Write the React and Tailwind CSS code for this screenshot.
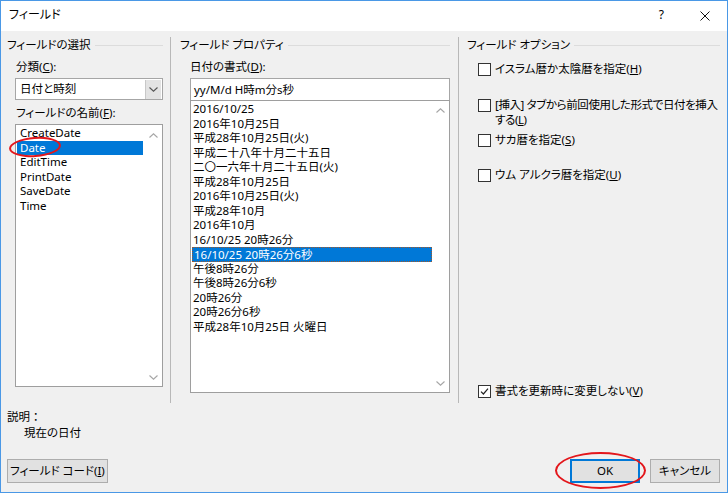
const listA = ["CreateDate", "Date", "EditTime", "PrintDate", "SaveDate", "Time"]

const listB = [
  "2016/10/25",
  "2016年10月25日",
  "平成28年10月25日(火)",
  "平成二十八年十月二十五日",
  "二〇一六年十月二十五日(火)",
  "平成28年10月25日",
  "2016年10月25日(火)",
  "平成28年10月",
  "2016年10月",
  "16/10/25 20時26分",
  "16/10/25 20時26分6秒",
  "午後8時26分",
  "午後8時26分6秒",
  "20時26分",
  "20時26分6秒",
  "平成28年10月25日 火曜日",
]

function Chevron({ up = false, color = "#a6a6a6" }) {
  return (
    <svg width="9" height="5" viewBox="0 0 9 5" className="block">
      <path d={up ? "M0.5 4.5 L4.5 0.8 L8.5 4.5" : "M0.5 0.5 L4.5 4.2 L8.5 0.5"} fill="none" stroke={color} strokeWidth="1.1" />
    </svg>
  )
}

function GroupHeader({ title, className = "" }) {
  return (
    <div className={`flex h-[16px] items-center leading-[16px] ${className}`}>
      <span className="whitespace-nowrap">{title}</span>
      <span className="ml-[4px] h-px flex-1 bg-[#dcdcdc]" />
    </div>
  )
}

function Check({ checked = false }) {
  return (
    <span className="mt-[2px] flex h-[13px] w-[13px] shrink-0 items-center justify-center border border-[#333333] bg-white">
      {checked && (
        <svg width="9" height="9" viewBox="0 0 9 9">
          <path d="M1 4.6 L3.4 7 L8 1.6" fill="none" stroke="#222" strokeWidth="1.2" />
        </svg>
      )}
    </span>
  )
}

function Scroll({ top, bottom }) {
  return (
    <div className={`flex w-[17px] flex-col items-center justify-between ${top} ${bottom}`}>
      <Chevron up />
      <Chevron />
    </div>
  )
}

export default function App() {
  return (
    <div className="relative flex h-[493px] w-[728px] flex-col border border-[#4a98e6] bg-[#f0f0f0] font-['Noto_Sans','Noto_Sans_CJK_JP',sans-serif] text-[11.5px] text-black [font-feature-settings:'palt']">
      {/* title bar */}
      <div className="flex h-[30px] items-center bg-white pl-[8px] text-[12px]">
        <span className="pb-[2px]">フィールド</span>
        <span className="ml-auto pb-[2px] text-[12px]">?</span>
        <svg width="10" height="10" viewBox="0 0 10 10" className="ml-[36px] mr-[17px]">
          <path d="M0.5 0.5 L9.5 9.5 M9.5 0.5 L0.5 9.5" stroke="#111" strokeWidth="1" />
        </svg>
      </div>

      <div className="flex h-[372px]">
        {/* left column */}
        <div className="flex w-[169px] flex-col">
          <GroupHeader title="フィールドの選択" className="ml-[6px] mr-[7px] mt-[6px]" />
          <div className="ml-[15px] mt-[6px] h-[16px] leading-[16px]">
            分類(<span className="underline">C</span>):
          </div>
          <div className="ml-[14px] mt-[3px] flex h-[22px] w-[148px] items-center border border-[#a6a6a6] bg-white">
            <span className="flex-1 pl-[4px] leading-[16px]">日付と時刻</span>
            <span className="mr-px flex h-[19px] w-[16px] items-center justify-center border-l border-[#c8c8c8] bg-[#e3e3e3]">
              <Chevron color="#555" />
            </span>
          </div>
          <div className="ml-[15px] mt-[5px] h-[16px] leading-[16px]">
            フィールドの名前(<span className="underline">F</span>):
          </div>
          <div className="ml-[14px] mt-[3px] flex h-[263px] w-[148px] border border-[#9e9e9e] bg-white">
            <div className="flex-1 pt-px">
              {listA.map((t) => (
                <div
                  key={t}
                  className={`ml-px mr-[2px] h-[14.5px] pl-[3px] leading-[14.5px] ${t === "Date" ? "bg-[#0078d7] text-white" : ""}`}
                >
                  {t}
                </div>
              ))}
            </div>
            <Scroll top="pt-[8px]" bottom="pb-[6px]" />
          </div>
        </div>

        <div className="mt-[6px] w-px bg-[#b8b8b8]" />

        {/* middle column */}
        <div className="flex w-[287px] flex-col">
          <GroupHeader title="フィールド プロパティ" className="ml-[9px] mr-[8px] mt-[6px]" />
          <div className="ml-[19px] mt-[6px] h-[16px] leading-[16px]">
            日付の書式(<span className="underline">D</span>):
          </div>
          <div className="ml-[19px] mt-[3px] flex h-[22px] w-[260px] items-center border border-b-0 border-[#a6a6a6] bg-white pl-[3px] leading-[16px]">
            yy/M/d H時m分s秒
          </div>
          <div className="ml-[19px] flex h-[293px] w-[260px] border border-[#9e9e9e] bg-white">
            <div className="flex-1 pt-px">
              {listB.map((t, i) => (
                <div
                  key={t}
                  className={`ml-px h-[14.5px] whitespace-nowrap pl-px leading-[14px] ${
                    i === 10 ? "border border-dotted border-[#a0582a] bg-[#0078d7] pl-0 text-white" : ""
                  }`}
                >
                  {t}
                </div>
              ))}
            </div>
            <Scroll top="pt-[7px]" bottom="pb-[6px]" />
          </div>
        </div>

        <div className="mt-[6px] w-px bg-[#b8b8b8]" />

        {/* right column */}
        <div className="flex flex-1 flex-col">
          <GroupHeader title="フィールド オプション" className="ml-[8px] mr-[7px] mt-[6px]" />
          <div className="ml-[19px] mt-[8px] flex items-start gap-[4px] leading-[15px]">
            <Check />
            <span className="whitespace-nowrap">
              イスラム暦か太陰暦を指定(<span className="underline">H</span>)
            </span>
          </div>
          <div className="ml-[19px] mt-[21px] flex items-start gap-[4px] leading-[15px]">
            <Check />
            <span className="whitespace-nowrap tracking-[-0.4px]">
              [挿入] タブから前回使用した形式で日付を挿入
              <br />
              する(<span className="underline">L</span>)
            </span>
          </div>
          <div className="ml-[19px] mt-[5px] flex items-start gap-[4px] leading-[15px]">
            <Check />
            <span className="whitespace-nowrap">
              サカ暦を指定(<span className="underline">S</span>)
            </span>
          </div>
          <div className="ml-[19px] mt-[20px] flex items-start gap-[4px] leading-[15px]">
            <Check />
            <span className="whitespace-nowrap">
              ウム アルクラ暦を指定(<span className="underline">U</span>)
            </span>
          </div>
          <div className="mb-[5px] ml-[19px] mt-auto flex items-start gap-[4px] leading-[15px]">
            <Check checked />
            <span className="whitespace-nowrap">
              書式を更新時に変更しない(<span className="underline">V</span>)
            </span>
          </div>
        </div>
      </div>

      {/* bottom */}
      <div className="ml-[6px] mt-[6px] h-[16px] leading-[16px] [font-feature-settings:normal]">説明：</div>
      <div className="ml-[23px] h-[16px] leading-[16px]">現在の日付</div>
      <div className="mt-[18px] flex h-[24px] pl-[6px] pr-[7px]">
        <button className="w-[101px] border border-[#adadad] bg-[#e1e1e1] leading-[16px]">
          フィールド コード(<span className="underline">I</span>)
        </button>
        <button className="ml-auto w-[70px] border-2 border-[#0078d7] bg-[#e1e1e1] leading-[16px]">OK</button>
        <button className="ml-[10px] w-[70px] border border-[#adadad] bg-[#e1e1e1] leading-[16px]">キャンセル</button>
      </div>

      {/* red annotation ellipses */}
      <div className="absolute left-[8px] top-[136px] h-[20px] w-[52px] rotate-[-4deg] rounded-[50%] border-2 border-[#e3171c]" />
      <div className="absolute left-[554px] top-[451px] h-[37px] w-[91px] rounded-[50%] border-2 border-[#e3171c]" />
    </div>
  )
}
